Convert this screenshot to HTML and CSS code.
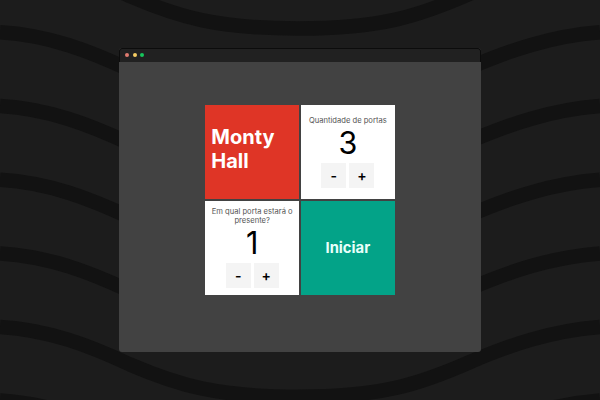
FILE: index.html
```html
<!DOCTYPE html>
<html lang="pt-BR">
<head>
<meta charset="utf-8">
<title>Monty Hall</title>
<link rel="stylesheet" href="styles.css">
</head>
<body>
<svg class="waves" viewBox="0 0 600 400" aria-hidden="true">
  <defs><path id="wave" d="M0 0C50 3 90 19 130 37.5C180 59 218 69.8 298 69.8C382 69.8 420 57 470 35C510 18 550 4 600 0"/></defs>
  <use href="#wave" y="-41.3"/>
  <use href="#wave" y="32.3"/>
  <use href="#wave" y="106.1"/>
  <use href="#wave" y="179.8"/>
  <use href="#wave" y="253.4"/>
  <use href="#wave" y="327"/>
  <use href="#wave" y="400.5"/>
</svg>
<div class="window">
  <header class="titlebar"><i class="dot close"></i><i class="dot minimize"></i><i class="dot zoom"></i></header>
  <main class="content">
    <div class="grid">
      <section class="card red"><h1>Monty Hall</h1></section>
      <section class="card">
        <p class="label">Quantidade de portas</p>
        <span class="value">3</span>
        <div class="buttons"><button>-</button><button>+</button></div>
      </section>
      <section class="card">
        <p class="label">Em qual porta estará o presente?</p>
        <span class="value">1</span>
        <div class="buttons"><button>-</button><button>+</button></div>
      </section>
      <section class="card green"><a class="start">Iniciar</a></section>
    </div>
  </main>
</div>
</body>
</html>
```
FILE: styles.css
```css
* { box-sizing: border-box; }
body {
  margin: 0;
  height: 400px;
  overflow: hidden;
  background: #1c1c1c;
  font-family: Inter, "Liberation Sans", sans-serif;
  display: flex;
  justify-content: center;
  align-items: center;
}
.waves {
  position: absolute;
  inset: 0;
  width: 600px;
  height: 400px;
  fill: none;
  stroke: #121212;
  stroke-width: 14.5;
}
.window {
  position: relative;
  width: 362px;
  height: 304px;
  border-radius: 3px;
  overflow: hidden;
  background: #424242;
  display: flex;
  flex-direction: column;
}
.titlebar {
  height: 14px;
  flex: none;
  display: flex;
  align-items: center;
  gap: 3.3px;
  padding-left: 5.3px;
  padding-bottom: 1px;
  background: #212121;
  border: 1px solid #0c0c0c;
  border-bottom: 0;
  border-radius: 3px 3px 0 0;
}
.dot {
  width: 4px;
  height: 4px;
  border-radius: 50%;
}
.close { background: #e07b70; }
.minimize { background: #f5cc62; }
.zoom { background: #16c65c; }
.content {
  flex: 1;
  display: flex;
  justify-content: center;
  padding-top: 43.4px;
}
.grid {
  display: grid;
  grid-template: 93.7px 93.7px / 93.7px 93.7px;
  gap: 2px;
  height: 189.4px;
}
.card {
  background: #fff;
  display: flex;
  flex-direction: column;
  align-items: center;
  justify-content: center;
  padding-bottom: 1px;
}
.red {
  background: #df3526;
  align-items: flex-start;
  padding: 0 6px 6px;
}
.green {
  background: #03a388;
  padding-bottom: 0;
}
h1 {
  margin: 0;
  color: #fff;
  font-size: 20px;
  line-height: 24px;
  font-weight: 700;
}
.label {
  margin: 0;
  padding: 0 4px;
  color: #555;
  font-size: 7.6px;
  line-height: 9px;
  text-align: center;
}
.value {
  color: #000;
  font-size: 30.5px;
  line-height: 36px;
  margin-bottom: 1.6px;
}
.buttons {
  display: flex;
  gap: 3px;
}
button {
  width: 25px;
  height: 25px;
  padding: 0;
  border: 0;
  background: #f4f4f4;
  color: #000;
  font: 600 14px/25px Inter, sans-serif;
}
.start {
  color: #e8fffa;
  font-size: 14.8px;
  font-weight: 700;
}
```
